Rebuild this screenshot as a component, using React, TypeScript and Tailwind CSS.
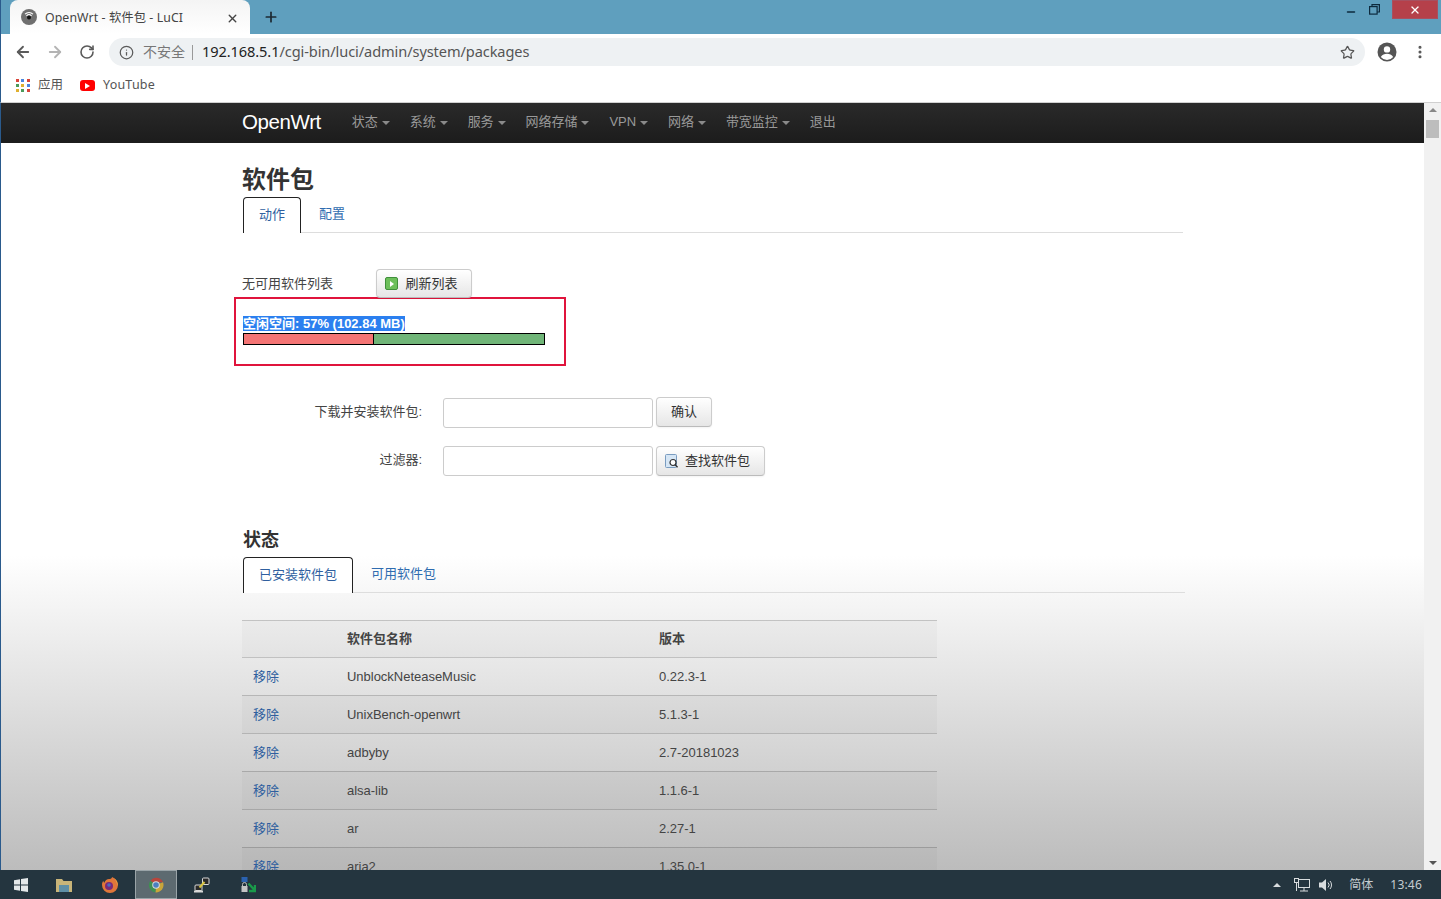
import React from "react";
import { ArrowLeft, ArrowRight, RotateCw, Info, Star, X, Plus, Minus, MoreVertical } from "lucide-react";

const sans = "font-['Liberation_Sans','Noto_Sans_CJK_SC',sans-serif]";

function Caret() {
  return <span className="inline-block ml-[4px] mt-[1px] w-0 h-0 border-x-[4px] border-x-transparent border-t-[4px] border-t-[#8a8a8a]" />;
}

function NavItem({ label, caret = true }: { label: string; caret?: boolean }) {
  return (
    <span className="flex items-center text-[13px] text-[#999] px-[10px] leading-[38px] tracking-[-0.05px]">
      {label}
      {caret && <Caret />}
    </span>
  );
}

function Tabs({ items }: { items: string[] }) {
  return (
    <div className="flex h-[36px] border-b border-[#ddd] text-[13px] leading-[34px]">
      <div className="h-[36px] px-[15px] border border-b-0 border-[#222] rounded-t-[4px] bg-white text-[#2f5f9f]">
        {items[0]}
      </div>
      <div className="h-[35px] px-[18px] text-[#2f6cb0]">{items[1]}</div>
    </div>
  );
}

function Btn({ children, className = "" }: { children: React.ReactNode; className?: string }) {
  return (
    <div
      className={
        "flex items-center justify-center border border-[#ccc] border-b-[#bbb] rounded-[4px] bg-gradient-to-b from-white to-[#e6e6e6] text-[13px] text-[#333] shadow-[inset_0_1px_0_#fff,0_1px_2px_rgba(0,0,0,0.05)] " +
        className
      }
    >
      {children}
    </div>
  );
}

function Row({ name, ver, dark }: { name: string; ver: string; dark: boolean }) {
  return (
    <div className={"flex h-[38px] items-center border-t border-black/[0.17] text-[13px] text-[#444] tracking-[-0.02px] " + (dark ? "bg-black/[0.025]" : "")}>
      <span className="w-[105px] pl-[11px] text-[#2f5f9f]">移除</span>
      <span className="w-[312px]">{name}</span>
      <span>{ver}</span>
    </div>
  );
}

function Windows() {
  return (
    <svg width="14" height="14" viewBox="0 0 14 14" fill="#e4e8ea">
      <path d="M0 2.2 6 1.3V6.6H0ZM7 1.1 14 0V6.6H7ZM0 7.4H6V12.7L0 11.8ZM7 7.4H14V14L7 12.9Z" />
    </svg>
  );
}

function Chrome({ size = 16 }: { size?: number }) {
  return (
    <svg width={size} height={size} viewBox="0 0 24 24">
      <path d="M12 12 3.5 5.5A11 11 0 0 1 22.5 8H12Z" fill="#b8453c" />
      <path d="M12 12 22.5 8A11 11 0 0 1 11 23Z" fill="#c9a53a" />
      <path d="M12 12 11 23A11 11 0 0 1 3.5 5.5Z" fill="#3f8f52" />
      <circle cx="12" cy="12" r="5.6" fill="#d8dcde" />
      <circle cx="12" cy="12" r="4.2" fill="#4a7fc0" />
    </svg>
  );
}

export default function App() {
  return (
    <div className={"w-[1441px] h-[899px] overflow-hidden flex flex-col bg-white " + sans}>
      {/* Title bar */}
      <div className="h-[34px] shrink-0 flex bg-[#5f9fbe] border-l-[1px] border-[#2a5a8c]">
        <div className="ml-[9px] w-[240px] h-[34px] pt-[2px] rounded-t-[8px] bg-gradient-to-b from-[#f4f4f4] to-white flex items-center pl-[11px] pr-[11px]">
          <svg width="16" height="16" viewBox="0 0 16 16" className="shrink-0 -mt-[3px]">
            <circle cx="8" cy="8" r="8" fill="#6f6f6f" />
            <path d="M4 5.2a6 6 0 0 1 8 0M5.4 6.8a4 4 0 0 1 5.2 0" stroke="#fff" strokeWidth="1.1" fill="none" />
            <circle cx="8" cy="8.6" r="2" fill="#111" />
          </svg>
          <span className="ml-[8px] text-[12.3px] text-[#444] font-['Noto_Sans','Noto_Sans_CJK_SC',sans-serif] tracking-[0.1px]">OpenWrt - 软件包 - LuCI</span>
          <X size={13} strokeWidth={2.6} className="ml-auto text-[#444]" />
        </div>
        <Plus size={16} strokeWidth={2.6} className="ml-[13px] mt-[9px] text-[#1d2a33]" />
        <div className="ml-auto flex items-start">
          <Minus size={12} strokeWidth={3} className="mt-[6px] mr-[12px] text-[#0d2a3e]" />
          <svg width="11" height="11" viewBox="0 0 11 11" className="mt-[4px] mr-[12px]" fill="none" stroke="#0d2a3e" strokeWidth="1.2">
            <rect x="0.6" y="2.6" width="7.5" height="7.5" />
            <path d="M3 2.6V.6h7.4V8H8.1" />
          </svg>
          <div className="w-[46px] h-[19px] bg-[#b5404a] mr-[3px] flex items-center justify-center border border-[#a65060]">
            <X size={12} strokeWidth={2.6} className="text-white" />
          </div>
        </div>
      </div>

      {/* Toolbar */}
      <div className="h-[35px] pt-px shrink-0 flex items-center border-l border-[#2a5a8c] bg-white">
        <ArrowLeft size={18} strokeWidth={2.4} className="ml-[13px] text-[#5a5a5a]" />
        <ArrowRight size={18} strokeWidth={2.4} className="ml-[14px] text-[#b4b4b4]" />
        <RotateCw size={16} strokeWidth={2.4} className="ml-[15px] text-[#5a5a5a]" />
        <div className="ml-[14px] w-[1256px] h-[28px] rounded-full bg-[#eef1f3] flex items-center pl-[10px] pr-[10px]">
          <Info size={15} strokeWidth={2} className="text-[#5a5a5a]" />
          <span className="ml-[9px] text-[14px] text-[#777]">不安全</span>
          <span className="ml-[7px] w-px h-[15px] bg-[#999]" />
          <span className="ml-[9px] text-[14.6px] text-[#555] font-['Noto_Sans',sans-serif] tracking-[-0.1px]">
            <span className="text-[#222]">192.168.5.1</span>/cgi-bin/luci/admin/system/packages
          </span>
          <Star size={15} strokeWidth={2} className="ml-auto text-[#555]" />
        </div>
        <svg width="20" height="20" viewBox="0 0 20 20" className="ml-[12px]">
          <circle cx="10" cy="10" r="9.5" fill="#555" />
          <circle cx="10" cy="7.4" r="3.2" fill="#fff" />
          <path d="M3.8 15c1.4-2.4 3.8-3.2 6.2-3.2s4.8.8 6.2 3.2a8 8 0 0 1-12.4 0Z" fill="#fff" />
        </svg>
        <MoreVertical size={16} strokeWidth={2.6} className="ml-[15px] text-[#555]" />
      </div>

      {/* Bookmarks */}
      <div className="h-[34px] shrink-0 flex items-center border-l border-[#2a5a8c] border-b border-b-[#d0d0d0] bg-white text-[12.5px] text-[#555]">
        <div className="ml-[15px] grid grid-cols-3 gap-[2px] w-[14px]">
          {["#d9453a","#4a86e0","#d9453a","#4a9a5a","#e0b030","#4a86e0","#e0b030","#4a9a5a","#d9453a"].map((c, i) => (
            <span key={i} className="w-[3px] h-[3px]" style={{ background: c }} />
          ))}
        </div>
        <span className="ml-[8px]">应用</span>
        <div className="ml-[17px] w-[15px] h-[11px] rounded-[3px] bg-[#f00] flex items-center justify-center">
          <span className="w-0 h-0 border-y-[3px] border-y-transparent border-l-[5px] border-l-white" />
        </div>
        <span className="ml-[8px] font-['Noto_Sans',sans-serif] text-[12.5px] tracking-[0.2px]">YouTube</span>
      </div>

      {/* Viewport */}
      <div className="flex-1 min-h-0 flex border-l border-[#2a5a8c]">
        <div className="flex-1 min-w-0 overflow-hidden bg-gradient-to-b from-white from-[59%] to-[#bcbcbc]">
          <div className="h-[40px] pb-[2px] bg-gradient-to-b from-[#2a2a2a] to-[#1c1c1c] flex items-center pl-[241px]">
            <span className="text-[20.5px] text-white mr-[21px] tracking-[-0.4px]">OpenWrt</span>
            <NavItem label="状态" />
            <NavItem label="系统" />
            <NavItem label="服务" />
            <NavItem label="网络存储" />
            <NavItem label="VPN" />
            <NavItem label="网络" />
            <NavItem label="带宽监控" />
            <NavItem label="退出" caret={false} />
          </div>

          <div className="w-[940px] ml-[242px]">
            <h1 className="mt-[19px] -ml-px text-[24px] leading-[35px] font-bold text-[#333]">软件包</h1>
            <Tabs items={["动作", "配置"]} />

            <div className="mt-[36px] flex items-center h-[29px] text-[13px] text-[#444]">
              <span className="-ml-px w-[134px]">无可用软件列表</span>
              <Btn className="w-[96px] h-[29px] -mt-px pt-px">
                <span className="w-[13px] h-[13px] mr-[7px] -ml-[5px] rounded-[2px] bg-[#6cbf5a] border border-[#3f8f3a] flex items-center justify-center">
                  <span className="w-0 h-0 border-y-[3px] border-y-transparent border-l-[4px] border-l-white" />
                </span>
                刷新列表
              </Btn>
            </div>

            <div className="-mt-px -ml-[9px] w-[332px] h-[69px] border-[2px] border-[#e0143c] pl-[7px] pt-[17px]">
              <div className="h-[15px] flex items-center text-[13px] font-bold leading-[15px]">
                <span className="bg-[#2b7fef] text-white">空闲空间: 57% (102.84 MB)</span>
              </div>
              <div className="mt-[2px] w-[302px] h-[12px] border border-black flex">
                <div className="w-[130px] bg-[#f47575] border-r border-black" />
                <div className="flex-1 bg-[#70b578]" />
              </div>
            </div>

            <div className="mt-[32px] flex items-center h-[30px] text-[13px] text-[#444]">
              <span className="w-[179px] text-right pb-[3px]">下载并安装软件包:</span>
              <div className="ml-[21px] w-[210px] h-[30px] rounded-[3px] border border-[#ccc] bg-white" />
              <Btn className="ml-[3px] w-[56px] h-[30px] -mt-[2px]">确认</Btn>
            </div>
            <div className="mt-[18px] flex items-center h-[30px] text-[13px] text-[#444]">
              <span className="w-[179px] text-right pb-[2px]">过滤器:</span>
              <div className="ml-[21px] w-[210px] h-[30px] rounded-[3px] border border-[#ccc] bg-white" />
              <Btn className="ml-[3px] w-[109px] h-[30px]">
                <svg width="14" height="14" viewBox="0 0 14 14" className="mr-[6px] -ml-[6px]">
                  <rect x="0.5" y="0.5" width="11" height="13" rx="1" fill="#d6e6f5" stroke="#7a9cc0" />
                  <circle cx="8" cy="8.5" r="3" fill="#fff" stroke="#333" strokeWidth="1.2" />
                  <path d="M10 10.7 12.6 13.2" stroke="#333" strokeWidth="1.4" />
                </svg>
                查找软件包
              </Btn>
            </div>

            <h2 className="mt-[51px] text-[18px] leading-[26px] font-bold text-[#333]">状态</h2>
            <div className="mt-[4px] w-[942px]">
              <Tabs items={["已安装软件包", "可用软件包"]} />
            </div>

            <div className="mt-[27px] -ml-px w-[695px]">
              <div className="flex h-[37px] items-center border-t border-black/[0.17] text-[13px] font-bold text-[#444] bg-black/[0.025]">
                <span className="w-[105px]" />
                <span className="w-[312px]">软件包名称</span>
                <span>版本</span>
              </div>
              <Row name="UnblockNeteaseMusic" ver="0.22.3-1" dark={false} />
              <Row name="UnixBench-openwrt" ver="5.1.3-1" dark={true} />
              <Row name="adbyby" ver="2.7-20181023" dark={false} />
              <Row name="alsa-lib" ver="1.1.6-1" dark={true} />
              <Row name="ar" ver="2.27-1" dark={false} />
              <Row name="aria2" ver="1.35.0-1" dark={true} />
            </div>
          </div>
        </div>

        {/* Scrollbar */}
        <div className="w-[17px] shrink-0 bg-[#f1f1f1] flex flex-col items-center">
          <span className="mt-[5px] w-0 h-0 border-x-[4px] border-x-transparent border-b-[4px] border-b-[#888]" />
          <div className="mt-[8px] w-[13px] h-[18px] bg-[#bdbdbd]" />
          <span className="mt-auto mb-[5px] w-0 h-0 border-x-[4px] border-x-transparent border-t-[4px] border-t-[#555]" />
        </div>
      </div>

      {/* Taskbar */}
      <div className="h-[29px] shrink-0 bg-[#24353f] flex items-center">
        <div className="ml-[14px] w-[14px] flex"><Windows /></div>
        <svg width="16" height="14" viewBox="0 0 16 14" className="ml-[28px]">
          <path d="M0 1h6l1.5 2H16v11H0Z" fill="#c9b579" />
          <rect x="3" y="7" width="10" height="7" fill="#5f8fa6" />
        </svg>
        <svg width="16" height="16" viewBox="0 0 16 16" className="ml-[30px]">
          <path d="M10 0c4 1.5 6 5 6 8a8 8 0 0 1-16 0c0-2 .6-3.2 1.4-4.2 0 1 .5 1.6 1 2C3 3.6 5 2 7 2 8.5 2 10 1.5 10 0Z" fill="#e0763a" />
          <path d="M12 1c3 2 4 5 3.5 8-.5-3-1.5-6-3.5-8Z" fill="#e8b040" />
          <circle cx="7" cy="9" r="4" fill="#7a2a78" />
          <circle cx="7" cy="8" r="1.8" fill="#4a68c0" />
        </svg>
        <div className="ml-[17px] w-[42px] h-[29px] bg-[#5d6a70] border border-[#9aa4a8] flex items-center justify-center">
          <Chrome />
        </div>
        <svg width="16" height="16" viewBox="0 0 16 16" className="ml-[17px]">
          <rect x="8.5" y="1" width="6.5" height="6.5" rx="1" fill="#2a2a2a" stroke="#d8d8d8" />
          <rect x="1" y="8" width="7" height="5.5" rx="1" fill="#2a2a2a" stroke="#d8d8d8" />
          <rect x="0" y="13.5" width="9" height="2" fill="#d8d8d8" />
          <path d="M5.5 10.5 10.5 5" stroke="#d8c440" strokeWidth="2" />
        </svg>
        <svg width="16" height="16" viewBox="0 0 16 16" className="ml-[30px]">
          <rect x="1.5" y="0" width="6" height="5" fill="#2a62b0" />
          <path d="M2.5 9V7.5a2 2 0 0 1 4 0V9" stroke="#bbb" fill="none" />
          <rect x="1.5" y="9" width="6" height="6" fill="#c4c4c4" />
          <path d="M8.5 6.5 14.5 13M15 8v6h-6" stroke="#1a9a4a" strokeWidth="2.4" fill="none" />
        </svg>
        <div className="ml-auto flex items-center text-[#c4ccd0] text-[12px] font-['Noto_Sans','Noto_Sans_CJK_SC',sans-serif]">
          <span className="w-0 h-0 border-x-[4px] border-x-transparent border-b-[4px] border-b-[#d8dcde]" />
          <svg width="16" height="14" viewBox="0 0 16 14" className="ml-[13px]" fill="none" stroke="#d8dcde">
            <rect x="4.5" y="1.5" width="11" height="8" />
            <path d="M10 9.5V13M6 13h8" />
            <rect x="0.5" y="0.5" width="4" height="4" fill="#24353f" />
            <path d="M2.5 4.5V13" />
          </svg>
          <svg width="15" height="14" viewBox="0 0 15 14" className="ml-[9px]" fill="none">
            <path d="M0 4.5h3L7 1v12L3 9.5H0Z" fill="#d8dcde" />
            <path d="M9 4.5a3.5 3.5 0 0 1 0 5M11 3a6 6 0 0 1 0 8" stroke="#d8dcde" />
          </svg>
          <span className="ml-[15px]">简体</span>
          <span className="ml-[17px] mr-[19px] tracking-[0.2px]">13:46</span>
        </div>
      </div>
    </div>
  );
}
